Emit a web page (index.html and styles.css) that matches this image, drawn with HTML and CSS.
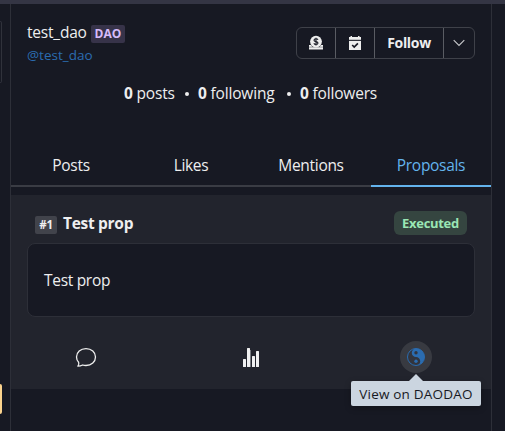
FILE: index.html
```html
<!DOCTYPE html>
<html lang="en">
<head>
<meta charset="utf-8">
<title>test_dao</title>
<link rel="stylesheet" href="styles.css">
</head>
<body>
<div class="topbar"></div>
<div class="layout">
  <aside class="side"><div class="side-box"></div><div class="side-button"></div></aside>
  <main class="column">
    <header class="profile">
      <div class="identity">
        <div class="name-row"><span class="name">test_dao</span><span class="tag dao">DAO</span></div>
        <a class="handle">@test_dao</a>
      </div>
      <div class="actions">
        <button class="icon-btn"><svg width="16" height="16" viewBox="0 0 16 16"><path fill="#eee" d="M1 10h2.2l1 2h7.6l1-2H15v4.6H1z"/><path fill="#999b9f" d="M1 11.6h14v1H1z"/><circle cx="8" cy="6.6" r="5.9" fill="#eee"/><path d="M10 4.8C9.6 4 9 3.8 8 3.8c-1.200 0-2 .5-2 1.400 0 2 4 .8 4 2.900 0 .9-.8 1.400-2 1.400-1 0-1.800-.4-2.100-1.200M8 2.700v7.900" fill="none" stroke="#171923" stroke-width="1.100"/></svg></button>
        <button class="icon-btn"><svg width="14" height="16" viewBox="0 0 14 16"><path fill="#eee" d="M2.500 1h1.500v1h6V1h1.500v1H13v3H1V2h1.500zM1 6h12v9H1z"/><path fill="#999b9f" d="M1 4.500h12v.7H1z"/><path d="m4.200 10 2 2 3.700-3.700" fill="none" stroke="#171923" stroke-width="1.700"/></svg></button>
        <button class="follow"><span>Follow</span></button>
        <button class="more"><svg width="12" height="8" viewBox="0 0 12 8"><path d="m.7 1.200 5.300 5.300 5.300-5.300" fill="none" stroke="#c8c9cc" stroke-width="1.100"/></svg></button>
      </div>
    </header>
    <div class="stats"><span class="s1"><b>0</b> posts</span><i class="dot"></i><span class="s2"><b>0</b> following</span><i class="dot"></i><span class="s3"><b>0</b> followers</span></div>
    <nav class="tabs"><a class="t1">Posts</a><a class="t2">Likes</a><a class="t3">Mentions</a><a class="t4 active">Proposals</a></nav>
    <article class="card">
      <div class="card-head"><span class="tag number">#1</span><span class="title">Test prop</span><span class="status">Executed</span></div>
      <div class="body"><span>Test prop</span></div>
      <footer class="footer">
        <span class="cell"><svg width="22" height="22" viewBox="0 0 22 22"><path d="M2.900 20.200c.9-1.200 1.200-2.600.7-3.900C2.200 14.800 1.500 13.200 1.500 11.100c0-4.700 4-8.500 9.500-8.500s9.500 3.800 9.500 8.500-4 8.400-9.500 8.400c-1.200 0-2.300-.1-3.300-.5-1.500.8-3 1.200-4.800 1.200Z" fill="none" stroke="#eee" stroke-width="1.300" stroke-linejoin="round"/></svg></span>
        <span class="cell"><svg width="18" height="20" viewBox="0 0 18 20"><g fill="#f0f0f1"><rect x="1" y="12" width="3" height="8" rx=".5"/><rect x="5" y="1" width="3" height="19" rx=".5"/><rect x="10" y="9" width="3" height="11" rx=".5"/><rect x="14" y="4" width="3" height="16" rx=".5"/></g><path d="M8 3h1v17H8z" fill="#777a80"/></svg></span>
        <span class="cell"><span class="round"><svg width="18" height="18" viewBox="0 0 18 18"><circle cx="9" cy="9" r="8.500" fill="#32353e" stroke="#2b6cb0" stroke-width="1"/><path d="M9 .5a8.500 8.500 0 0 1 0 17A4.250 4.250 0 0 0 9 9 4.250 4.250 0 0 1 9 .5Z" fill="#2b6cb0"/><circle cx="9" cy="4.700" r="1.700" fill="#32353e"/><circle cx="9" cy="13.300" r="1.700" fill="#2b6cb0"/></svg><span class="tooltip"><span>View on DAODAO</span></span></span></span>
      </footer>
    </article>
  </main>
</div>
</body>
</html>
```
FILE: styles.css
```css
* { box-sizing: border-box; }
body { margin: 0; height: 431px; overflow: hidden; background: #171923; color: #eeeeef; font: 15.5px/24px "Open Sans", "Noto Sans", sans-serif; letter-spacing: -.3px; }
.topbar { height: 4px; background: #343544; }
.layout { display: flex; height: 427px; }
.side { width: 10px; padding-top: 17px; }
.side-box { width: 2px; height: 62px; border: 1px solid #30323b; border-left: 0; border-radius: 0 4px 4px 0; }
.side-button { width: 2px; height: 30px; margin-top: 301px; background: #fbd38d; border-radius: 0 3px 3px 0; }
.column { width: 482px; border: solid #2d2f38; border-width: 0 1px; }
.profile { display: flex; justify-content: space-between; height: 66px; padding: 16px 16px 0; }
.name-row { display: flex; align-items: center; height: 25px; gap: 4px; }
.name { width: 60px; white-space: nowrap; position: relative; top: -1px; letter-spacing: -.2px; }
.tag { display: flex; align-items: center; justify-content: center; height: 18px; border-radius: 2px; font-weight: 700; font-size: 12px; }
.dao { width: 34px; margin-top: 3px; background: #373349; color: #d6bcfa; letter-spacing: .1px; }
.handle { display: block; font-size: 13.5px; line-height: 21px; color: #2b6cb0; letter-spacing: 0; }
.actions { display: flex; width: 179px; height: 32px; margin-top: 7px; border: 1px solid #3f4149; border-radius: 6px; }
button { display: flex; align-items: center; justify-content: center; padding: 0; border: 0; background: none; color: #eeeeef; font: 700 14px/20px "Open Sans", sans-serif; }
button + button { border-left: 1px solid #5a5c63; }
.icon-btn { width: 39px; }
.icon-btn:first-child { width: 38px; }
.follow { width: 69px; letter-spacing: -.3px; }
.more { width: 31px; }
.stats { display: flex; align-items: center; height: 24px; margin-top: 11px; padding-left: 113px; white-space: nowrap; letter-spacing: -.18px; }
.stats b { font-weight: 700; }
.s1 { width: 52px; }
.s2 { width: 79px; }
.dot { width: 4px; height: 4px; margin: 2px 9px 0 9px; border-radius: 50%; background: #eee; }
.s2 + .dot { margin-left: 10px; margin-right: 9px; }
.tabs { display: grid; grid-template-columns: repeat(4, 1fr); height: 42px; margin-top: 40px; }
.tabs a { display: flex; justify-content: center; padding-top: 8px; border-bottom: 2px solid #3a3c44; }
.tabs .active { color: #63b3ed; border-color: #63b3ed; }
.card { height: 202px; border-top: 8px solid #171923; padding: 16px 16px 0; background: #22242d; }
.card-head { display: flex; height: 32px; padding: 0 8px; }
.number { width: 22px; margin-top: 5px; background: #41434b; font-size: 11.5px; }
.title { margin: 0 auto 0 6px; font-weight: 700; font-size: 15.5px; line-height: 25px; letter-spacing: -.3px; }
.status { width: 73px; height: 24px; background: #354540; border-radius: 6px; color: #9ae6b4; font-weight: 700; font-size: 13px; text-align: center; }
.body { height: 74px; padding: 24px 16px; border: 1px solid #2d2f38; border-radius: 8px; background: #171923; }
.footer { display: flex; justify-content: space-between; height: 32px; margin: 24px 43px 0 48px; }
.cell { display: flex; align-items: center; }
.cell:nth-child(2) svg { margin: 0 -2px 0 2px; }
.round { position: relative; display: flex; align-items: center; justify-content: center; width: 32px; height: 32px; border-radius: 50%; background: #383a41; }
.tooltip { position: absolute; top: 40px; left: -49px; width: 130px; height: 25px; border-radius: 2px; background: #cbd5e0; color: #171923; font-size: 13.5px; font-weight: 500; line-height: 26px; letter-spacing: .2px; text-align: center; white-space: nowrap; box-shadow: 0 2px 6px #0004; }
.tooltip::before { content: ""; position: absolute; top: -7px; left: 58px; border: solid transparent; border-width: 0 7px 7px; border-bottom-color: #cbd5e0; }
```
